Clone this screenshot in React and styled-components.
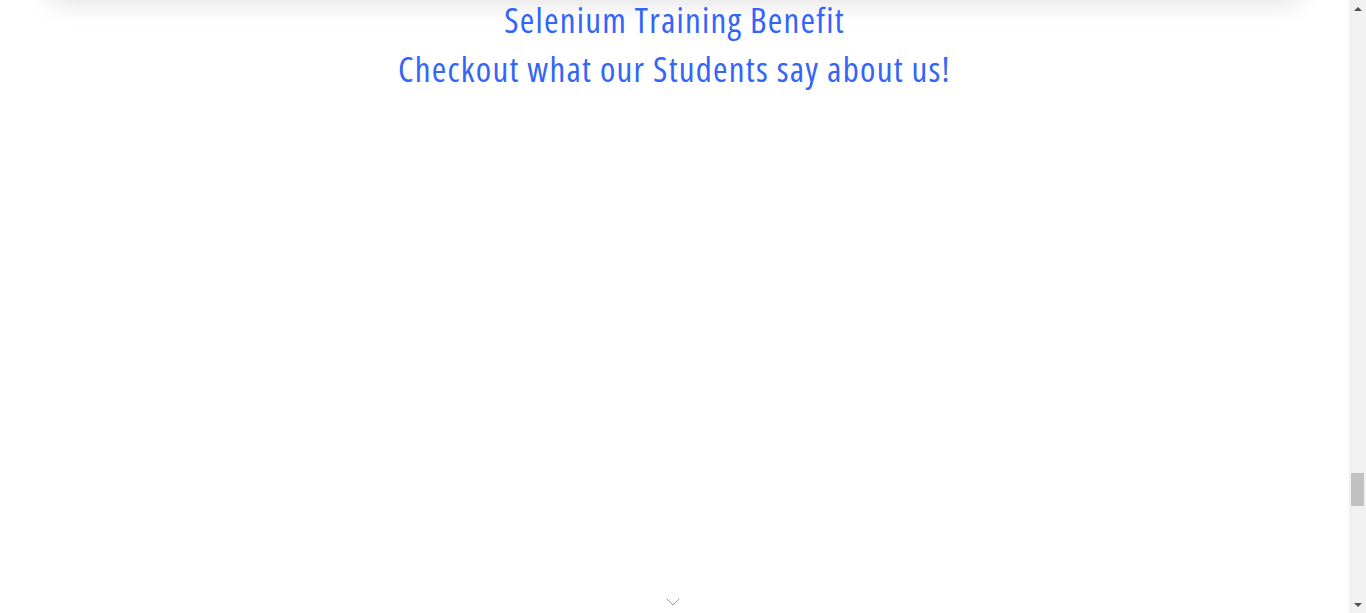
import React, { useLayoutEffect } from "react";
import styled, { createGlobalStyle } from "styled-components";
import { ChevronDown } from "lucide-react";

const GlobalStyle = createGlobalStyle`
  html, body {
    margin: 0;
    padding: 0;
    background: #ffffff;
  }
  body {
    font-family: "Open Sans", Roboto, sans-serif;
  }
`;

const CARD_HEIGHT = 320;

const Page = styled.div`
  padding-right: 17px;
`;

// earlier sections of the page, only the shadowed card edge is seen
const PrevSection = styled.section`
  padding: 0;
`;

const Card = styled.div`
  max-width: 1250px;
  height: ${CARD_HEIGHT}px;
  margin: 0 auto;
  background: #ffffff;
  box-shadow: 0 2px 24px rgba(0, 0, 0, 0.13);
`;

const Testimonials = styled.section`
  height: 615px;
  display: flex;
  flex-direction: column;
  align-items: center;
`;

const Title = styled.h2`
  margin: ${({ $first }) => ($first ? "0" : "9px 0 0")};
  font-family: "Open Sans", Roboto, sans-serif;
  font-stretch: 75%;
  font-weight: 400;
  font-size: 35px;
  line-height: 40px;
  letter-spacing: 1.25px;
  color: #3366f6;
  text-align: center;
`;

const Body = styled.div`
  flex: 1;
`;

const ScrollHint = styled.div`
  display: flex;
  justify-content: center;
  color: #9a9a9a;
  padding: 0 4px 1px 0;
`;

const NextSections = styled.section`
  height: 1600px;
`;

// the browser's scrollbar, drawn over the right edge of the window
const Scrollbar = styled.div`
  position: fixed;
  top: 0;
  right: 0;
  width: 17px;
  height: 100vh;
  display: flex;
  flex-direction: column;
  background: #f1f1f1;
`;

const ArrowButton = styled.div`
  height: 17px;
  display: flex;
  align-items: center;
  justify-content: center;

  &::before {
    content: "";
    width: 0;
    height: 0;
    border-left: 4px solid transparent;
    border-right: 4px solid transparent;
    ${({ $down }) =>
      $down ? "border-top: 4px solid #505050;" : "border-bottom: 4px solid #505050;"}
  }
`;

const Track = styled.div`
  flex: 1;
  padding-top: ${({ $offset }) => $offset}px;
`;

const Thumb = styled.div`
  height: 33px;
  margin: 0 2px;
  background: #c1c1c1;
`;

const App = () => {
  useLayoutEffect(() => {
    window.scrollTo(0, CARD_HEIGHT);
  }, []);

  return (
    <>
      <GlobalStyle />
      <Page>
        <PrevSection>
          <Card />
        </PrevSection>
        <Testimonials>
          <Title $first>Selenium Training Benefit</Title>
          <Title>Checkout what our Students say about us!</Title>
          <Body />
          <ScrollHint>
            <ChevronDown size={24} strokeWidth={1} />
          </ScrollHint>
        </Testimonials>
        <NextSections />
      </Page>
      <Scrollbar>
        <ArrowButton />
        <Track $offset={456}>
          <Thumb />
        </Track>
        <ArrowButton $down />
      </Scrollbar>
    </>
  );
};

export default App;
